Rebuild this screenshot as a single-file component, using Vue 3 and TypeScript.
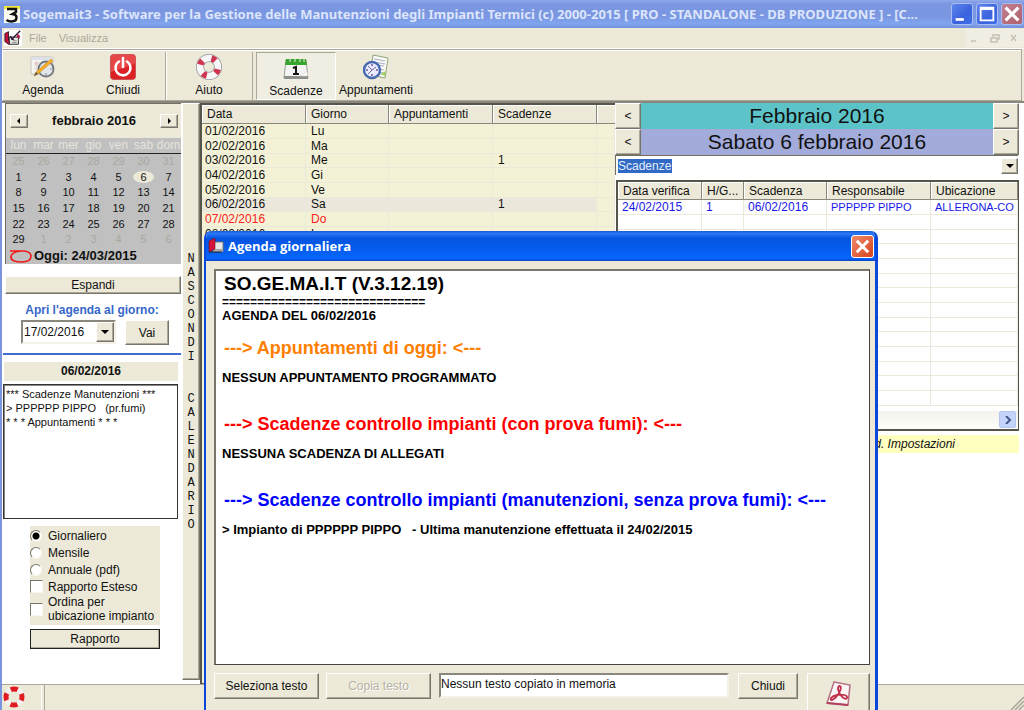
<script setup lang="ts">
import { ref } from 'vue'

interface CalendarDay {
  n: number
  muted?: boolean
  selected?: boolean
}

const weekdays: string[] = ['lun', 'mar', 'mer', 'gio', 'ven', 'sab', 'dom']

const range = (from: number, to: number, muted = false): CalendarDay[] =>
  Array.from({ length: to - from + 1 }, (_, i) => ({
    n: from + i,
    muted,
    selected: !muted && from + i === 6,
  }))

const days: CalendarDay[] = [...range(25, 31, true), ...range(1, 29), ...range(1, 6, true)]
const weeks: CalendarDay[][] = Array.from({ length: 6 }, (_, i) => days.slice(i * 7, i * 7 + 7))

const hideLabel: string[] = [...'NASCONDI  CALENDARIO']

const agendaRows = [
  { date: '01/02/2016', day: 'Lu', due: '' },
  { date: '02/02/2016', day: 'Ma', due: '' },
  { date: '03/02/2016', day: 'Me', due: '1' },
  { date: '04/02/2016', day: 'Gi', due: '' },
  { date: '05/02/2016', day: 'Ve', due: '' },
  { date: '06/02/2016', day: 'Sa', due: '1' },
  { date: '07/02/2016', day: 'Do', due: '' },
  { date: '08/02/2016', day: 'Lu', due: '' },
]

const reportKinds: string[] = ['Giornaliero', 'Mensile', 'Annuale (pdf)']
const report = ref<string>('Giornaliero')
const extended = ref<boolean>(false)
const sorted = ref<boolean>(false)
const openDate = ref<string>('17/02/2016')
const memo = ref<string>('Nessun testo copiato in memoria')
</script>

<template>
  <div class="app">
    <header class="titlebar">
      <svg class="title-icon" viewBox="0 0 16 17" aria-hidden="true">
        <rect width="16" height="17" fill="#fbfbf0" />
        <path d="M0 0h16v3H0z" fill="#f4e63a" />
        <path d="M3 3h9v3L8.500 8q4 .5 4 3.500 0 4-5 4-3 0-5-1.500" fill="none" stroke="#111" stroke-width="2.400" />
      </svg>
      <h1 class="caption">Sogemait3 - Software per la Gestione delle Manutenzioni degli Impianti Termici (c) 2000-2015 [ PRO - STANDALONE - DB PRODUZIONE ] - [C...</h1>
      <div class="window-buttons">
        <button class="win" type="button" aria-label="Riduci a icona">
          <svg viewBox="0 0 22 22"><path d="M4 17h9" stroke="#fff" stroke-width="3" /></svg>
        </button>
        <button class="win" type="button" aria-label="Ingrandisci">
          <svg viewBox="0 0 22 22"><path d="M4 4h14v14H4z M4 5.500h14" fill="none" stroke="#fff" stroke-width="2" /></svg>
        </button>
        <button class="win win-close" type="button" aria-label="Chiudi finestra">
          <svg viewBox="0 0 22 22"><path d="M4 4l14 14M18 4L4 18" stroke="#fff" stroke-width="3.500" /></svg>
        </button>
      </div>
    </header>

    <nav class="menubar">
      <svg class="menu-icon" viewBox="0 0 20 18" aria-hidden="true">
        <rect width="20" height="18" fill="#fff" />
        <path d="M1 4l4-2v10l3 3-3 1-4-3z" fill="#c4103a" stroke="#301018" />
        <path d="M6 8h10v8H6z" fill="#e8e8e4" stroke="#222" />
        <path d="M18 1L9 10l-2-3 M8 10l3 1" fill="none" stroke="#241030" stroke-width="1.500" />
        <path d="M15 4l3 3-1 3-3-2" fill="#b02048" />
        <path d="M9 14h5M10 12h4" stroke="#888" />
      </svg>
      <button type="button">File</button>
      <button type="button">Visualizza</button>
      <svg class="mdi" viewBox="0 0 58 18" aria-hidden="true">
        <path d="M0 0h58v18H0z" fill="#f0eee2" />
        <path d="M5 12h5M25 9h6v4h-6zM27 8V6h6v4h-2M45 6l5 6M50 6l-5 6" fill="none" stroke="#c5c2b4" stroke-width="1.500" />
      </svg>
    </nav>

    <div class="toolbar">
      <button class="tool" type="button">
        <svg viewBox="0 0 26 26" aria-hidden="true">
          <path d="M1 3h22v17H1z" fill="#f5f5f2" stroke="#c6c4bc" />
          <path d="M1 3h22v3H1z" fill="#dde2ea" />
          <path d="M4 9h16M4 12h16M4 15h16M7 7v12M12 7v12" stroke="#ddd4d4" />
          <path d="M5 8h3v3H5z" fill="#eec4c0" />
          <circle cx="16" cy="15" r="7.500" fill="#dce3ea" fill-opacity=".8" stroke="#71777d" stroke-width="1.800" />
          <path d="M16 9v2M22 15h-2M16 21v-2M10 15h2" stroke="#8b9098" />
          <path d="M4 22l2-4L21 5l2 2L8 20z" fill="#f8ae25" stroke="#c98b25" stroke-width=".6" />
          <path d="M4 22l2-4 2 2z" fill="#555" />
        </svg>
        <span>Agenda</span>
      </button>
      <button class="tool" type="button">
        <svg viewBox="0 0 26 26" aria-hidden="true">
          <rect x=".5" y=".5" width="25" height="25" rx="3" fill="#db2026" stroke="#c55" />
          <path d="M1 4q0-3 3-3h18q3 0 3 3v6L1 18z" fill="#f05c5c" opacity=".65" />
          <path d="M9 7.500a7.500 7.500 0 1 0 8 0" fill="none" stroke="#fff" stroke-width="2.600" stroke-linecap="round" />
          <path d="M13 4v9" stroke="#fff" stroke-width="2.600" stroke-linecap="round" />
        </svg>
        <span>Chiudi</span>
      </button>
      <button class="tool ruled" type="button">
        <svg viewBox="0 0 26 26" aria-hidden="true">
          <circle cx="13" cy="13" r="9" fill="none" stroke="#92959a" stroke-width="8" />
          <circle cx="13" cy="13" r="9" fill="none" stroke="#f7f7f7" stroke-width="6.500" />
          <circle cx="13" cy="13" r="9" fill="none" stroke="#cf3450" stroke-width="6.500" stroke-dasharray="4.500 9.640" stroke-dashoffset="-1" transform="rotate(8 13 13)" />
        </svg>
        <span>Aiuto</span>
      </button>
      <button class="tool pressed" type="button">
        <svg viewBox="0 0 26 26" aria-hidden="true">
          <path d="M3 5h20l2 18H1z" fill="#f4f5f2" stroke="#9ba09a" />
          <path d="M1 21h24v3H1z" fill="#8d918e" />
          <path d="M3 4h20l1 6H2z" fill="#37a52d" />
          <path d="M7 3v4M12 3v4M17 3v4M21 3v4" stroke="#e5f2df" />
          <path d="M10 13l3-1v7M10 19h6" fill="none" stroke="#151515" stroke-width="2" />
          <path d="M17 21l7-5 .6 5z" fill="#fff" stroke="#ccc" stroke-width=".6" />
        </svg>
        <span>Scadenze</span>
      </button>
      <button class="tool" type="button">
        <svg viewBox="0 0 26 26" aria-hidden="true">
          <path d="M10 1l15 3-3 20-15-3z" fill="#f8faf3" stroke="#91a67e" />
          <path d="M11 5l11 2M11 8l11 2M14 11l7 1M16 15l5 1M16 18l4 1" stroke="#a8afd4" />
          <path d="M17 20l5 2 1-5z" fill="#a3cf67" />
          <circle cx="9" cy="16" r="8" fill="#e7edff" stroke="#4668af" stroke-width="2.400" />
          <path d="M9 10v2M9 20v2M3 16h2M13 16h2" stroke="#6c549e" stroke-width="1.500" />
          <path d="M5 12l4 4 4-3M9 16l-4 4" fill="none" stroke="#7c61a0" />
        </svg>
        <span>Appuntamenti</span>
      </button>
    </div>

    <main class="content">
      <aside class="side">
        <section class="calendar">
          <div class="cal-head">
            <button class="raised" type="button" aria-label="Mese precedente"><svg viewBox="0 0 6 6"><path d="M4 0v6L1 3z" /></svg></button>
            <strong>febbraio 2016</strong>
            <button class="raised" type="button" aria-label="Mese successivo"><svg viewBox="0 0 6 6"><path d="M2 0v6l3-3z" /></svg></button>
          </div>
          <table class="month">
            <thead>
              <tr><th v-for="w in weekdays" :key="w">{{ w }}</th></tr>
            </thead>
            <tbody>
              <tr v-for="(week, i) in weeks" :key="i">
                <td v-for="(d, j) in week" :key="j" :class="{ muted: d.muted, selected: d.selected }"><span>{{ d.n }}</span></td>
              </tr>
            </tbody>
          </table>
          <div class="today">
            <svg viewBox="0 0 24 14" aria-hidden="true"><path d="M1 2h14q7 1 7 5 0 6-9 6-11 0-11-5 0-5 10-6" fill="none" stroke="#f01818" stroke-width="1.600" /></svg>
            <strong>Oggi: 24/03/2015</strong>
          </div>
        </section>

        <button class="raised expand" type="button">Espandi</button>
        <label class="open-label" for="open-date">Apri l'agenda al giorno:</label>
        <div class="open-row">
          <div class="combo sunken">
            <input id="open-date" v-model="openDate" type="text" />
            <button class="raised" type="button" aria-label="Scegli data"><svg viewBox="0 0 8 4"><path d="M0 0h8L4 4z" /></svg></button>
          </div>
          <button class="raised go" type="button">Vai</button>
        </div>
        <div class="rule"></div>
        <div class="date-band">06/02/2016</div>
        <ul class="daybox">
          <li>*** Scadenze Manutenzioni ***</li>
          <li>&gt; PPPPPP PIPPO &nbsp; (pr.fumi)</li>
          <li>* * * Appuntamenti * * *</li>
        </ul>
        <fieldset class="options">
          <label v-for="kind in reportKinds" :key="kind"><input v-model="report" type="radio" name="report" :value="kind" />{{ kind }}</label>
          <label class="check"><input v-model="extended" type="checkbox" />Rapporto Esteso</label>
          <label class="check two"><input v-model="sorted" type="checkbox" /><span>Ordina per<br />ubicazione impianto</span></label>
        </fieldset>
        <button class="raised report" type="button">Rapporto</button>
      </aside>

      <button class="hide-strip raised" type="button" aria-label="Nascondi calendario">
        <span v-for="(c, i) in hideLabel" :key="i">{{ c }}</span>
      </button>

      <section class="agenda">
        <table class="grid agenda-grid">
          <colgroup><col class="c-date" /><col class="c-day" /><col class="c-date" /><col class="c-date" /><col /></colgroup>
          <thead>
            <tr><th>Data</th><th>Giorno</th><th>Appuntamenti</th><th>Scadenze</th><th></th></tr>
          </thead>
          <tbody>
            <tr v-for="r in agendaRows" :key="r.date" :class="{ current: r.day === 'Sa', holiday: r.day === 'Do' }">
              <td>{{ r.date }}</td><td>{{ r.day }}</td><td></td><td>{{ r.due }}</td><td></td>
            </tr>
          </tbody>
        </table>
      </section>

      <section class="details">
        <div class="stepper month-step">
          <button class="raised" type="button" aria-label="Mese prima">&lt;</button>
          <h2>Febbraio 2016</h2>
          <button class="raised" type="button" aria-label="Mese dopo">&gt;</button>
        </div>
        <div class="stepper day-step">
          <button class="raised" type="button" aria-label="Giorno prima">&lt;</button>
          <h2>Sabato 6 febbraio 2016</h2>
          <button class="raised" type="button" aria-label="Giorno dopo">&gt;</button>
        </div>
        <div class="filter">
          <select aria-label="Elenco"><option>Scadenze</option></select>
          <button class="raised" type="button" aria-label="Apri elenco"><svg viewBox="0 0 8 4"><path d="M0 0h8L4 4z" /></svg></button>
        </div>
        <div class="due-list">
          <table class="grid due-grid">
            <colgroup><col class="d1" /><col class="d2" /><col class="d3" /><col class="d4" /><col /></colgroup>
            <thead>
              <tr><th>Data verifica</th><th>H/G...</th><th>Scadenza</th><th>Responsabile</th><th>Ubicazione</th></tr>
            </thead>
            <tbody>
              <tr><td>24/02/2015</td><td>1</td><td>06/02/2016</td><td class="name">PPPPPP PIPPO</td><td class="name">ALLERONA-CO</td></tr>
              <tr v-for="n in 13" :key="n"><td></td><td></td><td></td><td></td><td></td></tr>
            </tbody>
          </table>
          <div class="hscroll">
            <button type="button" aria-label="Scorri a destra"><svg viewBox="0 0 8 8"><path d="M2 0l4 4-4 4" fill="none" stroke="#42598a" stroke-width="2" /></svg></button>
          </div>
        </div>
        <p class="hint">d. Impostazioni</p>
      </section>
    </main>

    <footer class="statusbar">
      <div class="status-icon">
        <svg viewBox="0 0 22 22" aria-hidden="true">
          <circle cx="11" cy="11" r="8" fill="none" stroke="#f4f1ee" stroke-width="5" />
          <circle cx="11" cy="11" r="8" fill="none" stroke="#e01c20" stroke-width="5" stroke-dasharray="7 5.560" stroke-dashoffset="3.500" />
        </svg>
      </div>
      <div class="status-text"></div>
      <svg class="grip" viewBox="0 0 14 14" aria-hidden="true"><path d="M1 14L14 1M5 14l9-9M9 14l5-5" stroke="#a8a598" stroke-width="1.500" /></svg>
    </footer>

    <div class="dialog" role="dialog" aria-labelledby="dialog-title">
      <div class="dialog-title">
        <svg viewBox="0 0 16 16" aria-hidden="true">
          <path d="M6 4h9v9H6z" fill="#e8e8e8" stroke="#777" />
          <path d="M7 11h8v3H4z" fill="#a8a8a8" />
          <path d="M1 3l6-3v11l-6 3z" fill="#d4143c" stroke="#701020" stroke-width=".6" />
          <path d="M1 14h13" stroke="#222" />
        </svg>
        <h2 id="dialog-title">Agenda giornaliera</h2>
        <button type="button" aria-label="Chiudi agenda">
          <svg viewBox="0 0 22 22"><path d="M5 5l12 12M17 5L5 17" stroke="#fff" stroke-width="3.200" /></svg>
        </button>
      </div>
      <div class="dialog-body">
        <article class="sheet">
          <h3 class="top">SO.GE.MA.I.T (V.3.12.19)</h3>
          <p class="underline">=============================</p>
          <p>AGENDA DEL 06/02/2016</p>
          <h3 class="first orange">---&gt; Appuntamenti di oggi: &lt;---</h3>
          <p>NESSUN APPUNTAMENTO PROGRAMMATO</p>
          <h3 class="red">---&gt; Scadenze controllo impianti (con prova fumi): &lt;---</h3>
          <p>NESSUNA SCADENZA DI ALLEGATI</p>
          <h3 class="blue">---&gt; Scadenze controllo impianti (manutenzioni, senza prova fumi): &lt;---</h3>
          <p>&gt; Impianto di PPPPPP PIPPO &nbsp; - Ultima manutenzione effettuata il 24/02/2015</p>
        </article>
        <div class="actions">
          <button class="raised wide" type="button">Seleziona testo</button>
          <button class="raised wide" type="button" disabled>Copia testo</button>
          <input v-model="memo" class="sunken memo" type="text" aria-label="Testo in memoria" />
          <button class="raised close" type="button">Chiudi</button>
          <button class="raised pdf" type="button" aria-label="Esporta PDF">
            <svg viewBox="0 0 26 26" aria-hidden="true">
              <path d="M8 1l16 3-2 20-21-2z" fill="#fdf6f6" stroke="#b56f80" stroke-width="1.500" />
              <path d="M1 22l21 2" stroke="#b1405c" stroke-width="2" />
              <path d="M14 5c3 1-2 11-8 14-3 0-1-4 5-5 5-1 11 0 10 3-2 3-8-3-9-9 0-2 1-3 2-3z" fill="none" stroke="#c0304c" stroke-width="1.800" />
            </svg>
          </button>
        </div>
      </div>
    </div>
  </div>
</template>

<style>
body {
  margin: 0;
  overflow: hidden;
}
</style>

<style scoped>
.app {
  position: relative;
  box-sizing: border-box;
  min-height: 100vh;
  display: flex;
  flex-direction: column;
  border-left: 2px solid #7a94e0;
  background: #ece9d8;
  color: #111;
  font: 12px/14px "Liberation Sans", Arial, sans-serif;
}
.app *,
.app *::before {
  box-sizing: border-box;
}
button,
input,
select {
  margin: 0;
  padding: 0;
  border: 0;
  border-radius: 0;
  background: none;
  color: inherit;
  font: inherit;
  outline: 0;
}
svg {
  display: block;
}
h1, h2, h3, p, ul, fieldset {
  margin: 0;
  padding: 0;
  border: 0;
}
.raised {
  background: #ece9d8;
  border: 1px solid;
  border-color: #fff #77756a #77756a #fff;
  box-shadow: inset -1px -1px 0 #aca899;
  display: flex;
  align-items: center;
  justify-content: center;
}
.sunken {
  background: #fff;
  border: 2px solid;
  border-color: #8a887c #f4f2e8 #f4f2e8 #8a887c;
}

.titlebar {
  display: flex;
  align-items: center;
  height: 28px;
  margin-left: -2px;
  padding: 0 1px 0 4px;
  background: linear-gradient(#8fa9ec, #7b96e0 15%, #7b97e2 60%, #80a5ee 85%, #7790dc);
}
.title-icon {
  width: 16px;
  height: 17px;
  flex: none;
}
.caption {
  flex: 1;
  min-width: 0;
  margin-left: 3px;
  overflow: hidden;
  white-space: nowrap;
  color: #dce5fb;
  font: 700 13px/20px "Noto Sans", "Open Sans", sans-serif;
}
.window-buttons {
  display: flex;
  gap: 3px;
}
.win {
  width: 22px;
  height: 22px;
  border: 1px solid #a9bdf2;
  border-radius: 3px;
  background: linear-gradient(135deg, #5f86ee, #3a62dc 60%, #3f6fee);
}
.win-close {
  background: linear-gradient(135deg, #c08090, #b0606c);
}

.menubar {
  display: flex;
  align-items: center;
  height: 21px;
  padding-left: 2px;
  color: #aca899;
  border-bottom: 1px solid #fff;
}
.menu-icon {
  width: 18px;
  height: 18px;
  margin-right: 7px;
}
.menubar button {
  margin-right: 12px;
  font-size: 11px;
}
.mdi {
  width: 58px;
  height: 18px;
  margin-left: auto;
}

.toolbar {
  display: flex;
  height: 52px;
  margin-right: 2px;
  border: 1px solid #aca899;
  border-color: #aca899 #aca899 #aca899 #fff;
  box-shadow: inset 0 1px 0 #fff;
}
.tool {
  display: flex;
  flex-direction: column;
  align-items: center;
  width: 80px;
  margin-top: 2px;
  padding-top: 2px;
}
.tool svg {
  width: 26px;
  height: 26px;
  margin-bottom: 3px;
}
.ruled {
  width: 88px;
  margin-left: 2px;
  border-left: 1px solid #aca899;
  border-right: 1px solid #aca899;
  box-shadow: inset 1px 0 0 #fff;
}
.pressed {
  margin-left: 3px;
  background: #f0eee2;
  border: 1px solid;
  border-color: #aca899 #fff #fff #aca899;
}

.content {
  flex: 1;
  display: grid;
  grid-template-columns: 180px 18px minmax(0, 415fr) minmax(0, 409fr);
  border-top: 2px solid #8a887c;
  background: #fff;
}
.side {
  padding: 0 1px 0 1px;
  display: flex;
  flex-direction: column;
}
.calendar {
  margin-left: 2px;
  border: 1px solid #716f64;
  border-width: 1px 0 0 1px;
  background: #c0c0c0;
}
.cal-head {
  display: flex;
  align-items: center;
  justify-content: space-between;
  height: 34px;
  padding: 0 3px 0 4px;
  background: #ece9d8;
  font-size: 13px;
}
.cal-head .raised {
  width: 18px;
  height: 14px;
}
.cal-head svg {
  width: 6px;
  height: 6px;
}
.month {
  width: 100%;
  height: 109px;
  border-collapse: collapse;
  table-layout: fixed;
  text-align: center;
  line-height: 14px;
}
.month th {
  height: 15px;
  padding: 0;
  border-bottom: 1px solid #222;
  color: #e6e4dc;
  font-weight: 400;
}
.month td {
  padding: 0;
  font-size: 11px;
}
.month .muted {
  color: #aaa89e;
}
.selected span {
  display: block;
  margin: 0 2px;
  line-height: 12px;
  border-radius: 50%;
  background: #ece9d8;
}
.today {
  display: flex;
  align-items: center;
  height: 17px;
  padding-left: 3px;
  font-size: 13px;
}
.today svg {
  width: 24px;
  height: 14px;
  margin-right: 1px;
}
.expand {
  margin: 12px 0 9px 2px;
  height: 18px;
}
.open-label {
  text-align: center;
  color: #3567c8;
  font-weight: 700;
}
.open-row {
  display: flex;
  gap: 9px;
  padding-left: 18px;
  margin-top: 3px;
}
.combo {
  display: flex;
  width: 95px;
  height: 24px;
}
.combo input {
  flex: 1;
  min-width: 0;
  padding-left: 1px;
}
.combo .raised {
  width: 18px;
}
.combo svg,
.filter svg {
  width: 8px;
  height: 4px;
}
.go {
  width: 44px;
  height: 25px;
}
.rule {
  margin-top: 8px;
  height: 2px;
  background: #3f6cce;
}
.date-band {
  margin: 7px 3px 3px 1px;
  background: #ece9d8;
  font: 700 12px/19px "Liberation Sans", Arial, sans-serif;
  text-align: center;
}
.daybox {
  height: 135px;
  margin-right: 3px;
  padding: 2px;
  border: 1px solid #333;
  box-shadow: inset 1px 1px 0 #888;
  list-style: none;
  white-space: nowrap;
  font-size: 11px;
}
.options {
  display: flex;
  flex-direction: column;
  width: 130px;
  margin: 7px 0 0 27px;
  padding: 1px 0 2px;
  background: #ece9d8;
}
.options label {
  display: flex;
  align-items: center;
  gap: 5px;
  height: 17px;
  font-size: 12px;
}
.options .two {
  height: 28px;
}
.options input {
  appearance: none;
  position: relative;
  width: 13px;
  height: 13px;
  background: #fff;
  border: 1px solid;
  border-color: #77756a #f8f6ee #f8f6ee #77756a;
  flex: none;
}
.options input[type="radio"] {
  width: 12px;
  height: 12px;
  margin-right: 1px;
  border-radius: 50%;
}
.options input[type="radio"]:checked {
  background: radial-gradient(circle, #000 0 3px, #fff 4px);
}
.report {
  width: 130px;
  height: 20px;
  margin: 4px 0 31px 27px;
  border: 1px solid #222;
}
.hide-strip {
  flex-direction: column;
  margin-bottom: 4px;
  font: 12px/14px "Liberation Mono", "Courier New", monospace;
}
.hide-strip span {
  height: 14px;
}

.grid {
  width: 100%;
  border-collapse: separate;
  border-spacing: 0;
  table-layout: fixed;
}
.grid th {
  height: 18px;
  padding: 0 0 0 5px;
  background: #ece9d8;
  border-right: 1px solid #8a887c;
  border-bottom: 1px solid #8a887c;
  box-shadow: inset 1px 1px 0 #fff;
  font-weight: 400;
  text-align: left;
}
.grid td {
  height: 15px;
  padding: 0 0 0 5px;
  line-height: 13px;
  white-space: nowrap;
  overflow: hidden;
}
.grid tr:nth-child(3n) td {
  height: 14px;
}
.agenda {
  border: 2px solid #56554c;
  border-bottom-width: 1px;
  border-right: 0;
  background: #f3f2d6;
}
.agenda-grid td {
  border-right: 1px solid #ebeada;
  border-bottom: 1px solid #ebeada;
}
.agenda-grid td:first-child {
  padding-left: 3px;
}
.agenda-grid th {
  height: 19px;
}
.agenda-grid th:last-child {
  border-right: 0;
}
.c-date {
  width: 104px;
}
.c-day {
  width: 83px;
}
.current td:not(:last-child) {
  background: #ebe7da;
}
.holiday {
  color: #f22;
}

.details {
  padding-right: 5px;
  display: flex;
  flex-direction: column;
}
.stepper {
  display: flex;
  height: 26px;
}
.stepper .raised {
  width: 26px;
}
.stepper h2 {
  flex: 1;
  font: 400 21px/25px "Liberation Sans", Arial, sans-serif;
  text-align: center;
}
.month-step {
  background: #5cc4c8;
}
.day-step {
  background: #a3abdb;
}
.filter {
  display: flex;
  justify-content: space-between;
  align-items: center;
  height: 20px;
  margin: 0 1px 5px 0;
  padding-left: 2px;
  border-top: 1px solid #716f64;
  border-left: 1px solid #716f64;
}
.filter select {
  appearance: none;
  height: 14px;
  background: #316ac5;
  color: #e6eefc;
  line-height: 14px;
}
.filter .raised {
  width: 17px;
  height: 16px;
}
.due-list {
  margin-left: 1px;
  border: 2px solid #56554c;
  border-right-width: 1px;
}
.due-grid td {
  border-right: 1px solid #ebe9da;
  border-bottom: 1px solid #ebe9da;
  color: #1818e8;
  padding-left: 4px;
}
.due-grid .name {
  font-size: 11px;
}
.d1 {
  width: 84px;
}
.d2 {
  width: 42px;
}
.d3 {
  width: 83px;
}
.d4 {
  width: 104px;
}
.hscroll {
  display: flex;
  justify-content: flex-end;
  margin-top: 5px;
  padding-right: 2px;
  height: 18px;
  background: linear-gradient(#f3f2ec, #fefefc);
}
.hscroll button {
  display: flex;
  align-items: center;
  justify-content: center;
  width: 17px;
  height: 17px;
  border: 1px solid #b4c6f0;
  border-radius: 2px;
  background: #c5d4fa;
}
.hscroll svg {
  width: 8px;
  height: 8px;
}
.hint {
  margin-top: 4px;
  padding-right: 64px;
  background: #ffffc0;
  line-height: 18px;
  font-style: italic;
  text-align: right;
}

.statusbar {
  display: flex;
  height: 26px;
  border-top: 1px solid #aca899;
}
.status-icon {
  width: 40px;
  padding: 1px 0 0 1px;
  border-right: 1px solid #fff;
}
.status-icon svg {
  width: 22px;
  height: 22px;
}
.status-text {
  flex: 1;
  margin-left: 2px;
  border-left: 1px solid #aca899;
}
.grip {
  width: 14px;
  height: 14px;
  align-self: flex-end;
}

.dialog {
  position: absolute;
  top: 231px;
  left: 202px;
  right: 146px;
  bottom: 0;
  display: flex;
  flex-direction: column;
  border: 3px solid #0a48dc;
  border-width: 0 3px 0 2px;
  border-radius: 7px 7px 0 0;
  background: #ece9d8;
  overflow: hidden;
}
.dialog-title {
  display: flex;
  align-items: center;
  height: 30px;
  margin: 0 -3px 0 -2px;
  padding: 0 4px;
  border-radius: 7px 7px 0 0;
  background: linear-gradient(#1858d8, #2a78f4 8%, #0554e0 25%, #0560f4 75%, #0668ff 90%, #0846cc);
}
.dialog-title svg {
  width: 16px;
  height: 16px;
}
.dialog-title h2 {
  flex: 1;
  margin-left: 4px;
  color: #fff;
  font: 700 13px/20px "Open Sans", "Noto Sans", sans-serif;
}
.dialog-title button {
  border: 1px solid #fff;
  border-radius: 3px;
  background: linear-gradient(135deg, #f08a6c, #d8421c);
}
.dialog-title button svg {
  width: 21px;
  height: 21px;
}
.dialog-body {
  flex: 1;
  display: flex;
  flex-direction: column;
  padding: 8px 5px 0 8px;
}
.sheet {
  flex: 1;
  padding: 2px 6px;
  border: 2px solid #77756a;
  border-right: 1px solid #444;
  border-bottom: 1px solid #444;
  background: #fff;
  color: #000;
  white-space: nowrap;
  overflow: hidden;
}
.sheet p {
  font: 700 13px/14px "Liberation Sans", Arial, sans-serif;
}
.sheet .underline {
  font-size: 12px;
}
.sheet h3 {
  margin: 28px 0 12px 2px;
  font: 700 18px/22px "Liberation Sans", Arial, sans-serif;
}
.sheet .top {
  margin: 0 0 0 2px;
  font-size: 19px;
}
.sheet .first {
  margin-top: 14px;
}
.orange {
  color: #ff8000;
}
.red {
  color: #f00;
}
.blue {
  color: #00f;
}
.actions {
  display: flex;
  align-items: flex-start;
  height: 45px;
  padding-top: 8px;
}
.actions .raised {
  height: 26px;
}
.wide {
  width: 105px;
  margin-right: 7px;
}
.raised:disabled {
  color: #b5b2a3;
  text-shadow: 1px 1px 0 #fff;
}
.memo {
  flex: 1;
  min-width: 0;
  height: 25px;
  margin: 0 9px 0 1px;
  padding-bottom: 4px;
}
.close {
  width: 60px;
  margin-right: 9px;
}
.actions .pdf {
  width: 63px;
  height: 42px;
}
.pdf svg {
  width: 26px;
  height: 26px;
}
</style>
